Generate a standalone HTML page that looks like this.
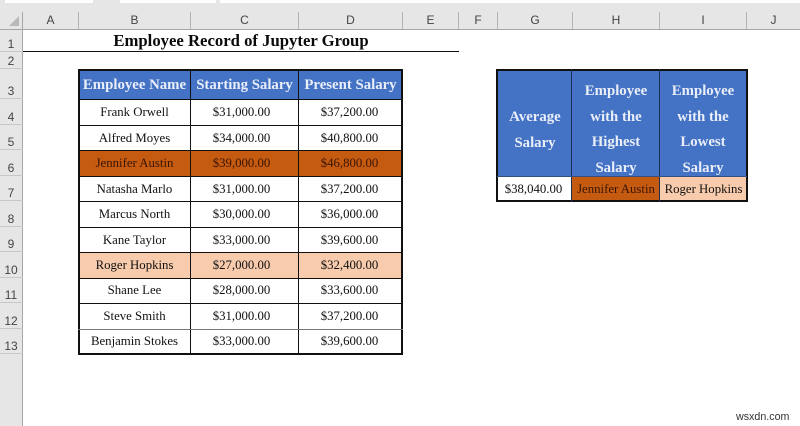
<!DOCTYPE html>
<html><head><meta charset="utf-8"><style>
html,body{margin:0;padding:0;background:#fff}
#p{position:relative;width:800px;height:426px;overflow:hidden;background:#fff;font-family:"Liberation Serif",serif;color:#111}
.a{position:absolute}
.h{position:absolute;top:12px;height:17px;line-height:17px;text-align:center;font:12px/17px "Liberation Sans",sans-serif;color:#444;border-right:1px solid #b4b4b4;box-sizing:border-box}
.r{position:absolute;left:0;width:23px;text-align:center;font:12px "Liberation Sans",sans-serif;color:#444;border-bottom:1px solid #c8c8c8;box-sizing:border-box;display:flex;align-items:flex-end;justify-content:center;padding-right:1px}
.c{position:absolute;box-sizing:border-box;font-size:12.8px;text-align:center;display:flex;align-items:center;justify-content:center;white-space:nowrap}
.v{margin-left:-3px}
.w{margin-left:-1px}
.hd{background:#4472c4;color:#e9eef8;font-weight:bold;font-size:14.8px}
.l{position:absolute;background:#111}
</style></head><body><div id="p">
<div class="a" style="left:0;top:0;width:800px;height:29px;background:#e6e6e6"></div>
<div class="a" style="left:5px;top:0;width:88px;height:3px;background:#fff"></div>
<div class="a" style="left:120px;top:0;width:96px;height:3px;background:#fff"></div>
<div class="a" style="left:220px;top:0;width:580px;height:3px;background:#fff"></div>
<div class="a" style="left:0;top:29px;width:800px;height:1px;background:#a6a6a6"></div>
<div class="a" style="left:0;top:30px;width:22px;height:396px;background:#e6e6e6"></div>
<div class="a" style="left:22px;top:12px;width:1px;height:414px;background:#a6a6a6"></div>
<svg class="a" style="left:9px;top:15px" width="11" height="12"><path d="M10 1V11H0Z" fill="#b9b9b9"/></svg>
<div class="h" style="left:23px;width:56px">A</div>
<div class="h" style="left:79px;width:112px">B</div>
<div class="h" style="left:191px;width:108px">C</div>
<div class="h" style="left:299px;width:104px">D</div>
<div class="h" style="left:403px;width:56px">E</div>
<div class="h" style="left:459px;width:39px">F</div>
<div class="h" style="left:498px;width:75px">G</div>
<div class="h" style="left:573px;width:87px">H</div>
<div class="h" style="left:660px;width:87px">I</div>
<div class="h" style="left:747px;width:53px;border:0">J</div>

<div class="r" style="top:30px;height:22px">1</div>
<div class="r" style="top:52px;height:17px">2</div>
<div class="r" style="top:69px;height:30px">3</div>
<div class="r" style="top:99px;height:26px">4</div>
<div class="r" style="top:125px;height:25px">5</div>
<div class="r" style="top:150px;height:26px">6</div>
<div class="r" style="top:176px;height:25px">7</div>
<div class="r" style="top:201px;height:26px">8</div>
<div class="r" style="top:227px;height:25px">9</div>
<div class="r" style="top:252px;height:26px">10</div>
<div class="r" style="top:278px;height:25px">11</div>
<div class="r" style="top:303px;height:26px">12</div>
<div class="r" style="top:329px;height:25px">13</div>

<div class="c" style="left:23px;top:30px;width:436px;height:21px;font-weight:bold;font-size:16.7px;color:#0a0a0a">Employee Record of Jupyter Group</div>
<div class="l" style="left:23px;top:51px;width:436px;height:1px"></div>

<div class="c hd" style="left:79px;top:71px;width:111px;height:29px">Employee Name</div>
<div class="c hd" style="left:191px;top:71px;width:107px;height:29px">Starting Salary</div>
<div class="c hd" style="left:299px;top:71px;width:103px;height:29px">Present Salary</div>

<div class="a" style="left:79px;top:150px;width:323px;height:26px;background:#c55a11"></div>
<div class="a" style="left:79px;top:252px;width:323px;height:26px;background:#f8cbad"></div>

<div class="c" style="left:79px;top:100px;width:111px;height:25px">Frank Orwell</div><div class="c v" style="left:191px;top:100px;width:107px;height:25px">$31,000.00</div><div class="c w" style="left:299px;top:100px;width:103px;height:25px">$37,200.00</div>
<div class="c" style="left:79px;top:126px;width:111px;height:24px">Alfred Moyes</div><div class="c v" style="left:191px;top:126px;width:107px;height:24px">$34,000.00</div><div class="c w" style="left:299px;top:126px;width:103px;height:24px">$40,800.00</div>
<div class="c" style="left:79px;top:151px;width:111px;height:25px;color:#3a1503">Jennifer Austin</div><div class="c v" style="left:191px;top:151px;width:107px;height:25px;color:#3a1503">$39,000.00</div><div class="c w" style="left:299px;top:151px;width:103px;height:25px;color:#3a1503">$46,800.00</div>
<div class="c" style="left:79px;top:177px;width:111px;height:25px">Natasha Marlo</div><div class="c v" style="left:191px;top:177px;width:107px;height:25px">$31,000.00</div><div class="c w" style="left:299px;top:177px;width:103px;height:25px">$37,200.00</div>
<div class="c" style="left:79px;top:202px;width:111px;height:25px">Marcus North</div><div class="c v" style="left:191px;top:202px;width:107px;height:25px">$30,000.00</div><div class="c w" style="left:299px;top:202px;width:103px;height:25px">$36,000.00</div>
<div class="c" style="left:79px;top:228px;width:111px;height:24px">Kane Taylor</div><div class="c v" style="left:191px;top:228px;width:107px;height:24px">$33,000.00</div><div class="c w" style="left:299px;top:228px;width:103px;height:24px">$39,600.00</div>
<div class="c" style="left:79px;top:253px;width:111px;height:25px">Roger Hopkins</div><div class="c v" style="left:191px;top:253px;width:107px;height:25px">$27,000.00</div><div class="c w" style="left:299px;top:253px;width:103px;height:25px">$32,400.00</div>
<div class="c" style="left:79px;top:278px;width:111px;height:24px">Shane Lee</div><div class="c v" style="left:191px;top:278px;width:107px;height:24px">$28,000.00</div><div class="c w" style="left:299px;top:278px;width:103px;height:24px">$33,600.00</div>
<div class="c" style="left:79px;top:304px;width:111px;height:25px">Steve Smith</div><div class="c v" style="left:191px;top:304px;width:107px;height:25px">$31,000.00</div><div class="c w" style="left:299px;top:304px;width:103px;height:25px">$37,200.00</div>
<div class="c" style="left:79px;top:329px;width:111px;height:24px">Benjamin Stokes</div><div class="c v" style="left:191px;top:329px;width:107px;height:24px">$33,000.00</div><div class="c w" style="left:299px;top:329px;width:103px;height:24px">$39,600.00</div>

<div class="l" style="left:78px;top:69px;width:325px;height:2px"></div>
<div class="l" style="left:78px;top:353px;width:325px;height:2px"></div>
<div class="l" style="left:78px;top:69px;width:2px;height:286px"></div>
<div class="l" style="left:401px;top:69px;width:2px;height:286px"></div>
<div class="l" style="left:190px;top:69px;width:1px;height:286px"></div>
<div class="l" style="left:298px;top:69px;width:1px;height:286px"></div>
<div class="l" style="left:78px;top:99px;width:325px;height:1px"></div>
<div class="l" style="left:78px;top:125px;width:325px;height:1px"></div>
<div class="l" style="left:78px;top:150px;width:325px;height:1px"></div>
<div class="l" style="left:78px;top:176px;width:325px;height:1px"></div>
<div class="l" style="left:78px;top:201px;width:325px;height:1px"></div>
<div class="l" style="left:78px;top:227px;width:325px;height:1px"></div>
<div class="l" style="left:78px;top:252px;width:325px;height:1px"></div>
<div class="l" style="left:78px;top:278px;width:325px;height:1px"></div>
<div class="l" style="left:78px;top:303px;width:325px;height:1px"></div>
<div class="l" style="left:78px;top:329px;width:325px;height:1px;background:#777"></div>

<div class="a" style="left:497px;top:69px;width:250px;height:107px;background:#4472c4"></div>
<div class="c hd" style="left:498px;top:105px;width:74px;height:51px;display:block;line-height:25.5px">Average<br>Salary</div>
<div class="c hd" style="left:573px;top:79px;width:86px;height:102px;display:block;line-height:25.5px;background:none">Employee<br>with the<br>Highest<br>Salary</div>
<div class="c hd" style="left:660px;top:79px;width:86px;height:102px;display:block;line-height:25.5px;background:none">Employee<br>with the<br>Lowest<br>Salary</div>
<div class="c" style="left:572px;top:177px;width:88px;height:24px;background:#c55a11;color:#3a1503">Jennifer Austin</div>
<div class="c" style="left:660px;top:177px;width:87px;height:24px;background:#f8cbad">Roger Hopkins</div>
<div class="c" style="left:498px;top:177px;width:71px;height:24px">$38,040.00</div>
<div class="l" style="left:497px;top:69px;width:250px;height:2px"></div>
<div class="l" style="left:497px;top:200px;width:250px;height:2px"></div>
<div class="l" style="left:496px;top:69px;width:2px;height:133px"></div>
<div class="l" style="left:746px;top:69px;width:2px;height:133px"></div>
<div class="l" style="left:571px;top:69px;width:1px;height:133px;background:#1b2f57"></div>
<div class="l" style="left:659px;top:69px;width:1px;height:133px;background:#1b2f57"></div>
<div class="l" style="left:497px;top:176px;width:250px;height:1px;background:#33507f"></div>

<div class="a" style="left:736px;top:411px;font:10.7px 'Liberation Sans',sans-serif;color:#333">wsxdn.com</div>
</div></body></html>
